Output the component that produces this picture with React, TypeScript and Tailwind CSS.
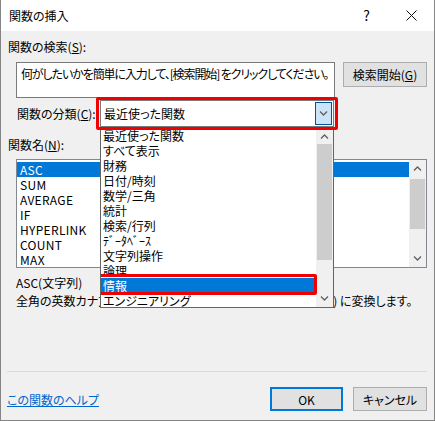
import React from "react";

const CATEGORIES = [
  "最近使った関数",
  "すべて表示",
  "財務",
  "日付/時刻",
  "数学/三角",
  "統計",
  "検索/行列",
  "ﾃﾞｰﾀﾍﾞｰｽ",
  "文字列操作",
  "論理",
  "情報",
  "エンジニアリング",
];

const FUNCTIONS = ["ASC", "SUM", "AVERAGE", "IF", "HYPERLINK", "COUNT", "MAX"];

function Chevron({ up = false }: { up?: boolean }) {
  return (
    <svg width="9" height="5" viewBox="0 0 9 5" fill="none">
      <path
        d={up ? "M1 4.5L4.5 1L8 4.5" : "M1 0.5L4.5 4L8 0.5"}
        stroke="#606060"
        strokeWidth="1.3"
      />
    </svg>
  );
}

// vertical scrollbar used by both list boxes
function ScrollBar({ thumbTop, thumbHeight }: { thumbTop: number; thumbHeight: number }) {
  return (
    <div className="relative w-[17px] h-full bg-[#f0f0f0] shrink-0">
      <div className="h-[17px] flex items-center justify-center">
        <Chevron up />
      </div>
      <div
        className="absolute left-px right-px bg-[#cdcdcd]"
        style={{ top: thumbTop, height: thumbHeight }}
      />
      <div className="absolute bottom-0 left-0 right-0 h-[17px] flex items-center justify-center">
        <Chevron />
      </div>
    </div>
  );
}

export default function App() {
  return (
    <div className="w-[435px] h-[421px] flex flex-col bg-[#f0f0f0] border-x border-b border-[#858585] text-[12px] text-black font-['Noto_Sans_CJK_JP',sans-serif] [font-feature-settings:'palt'] leading-[15px] overflow-hidden">
      {/* Title bar */}
      <div className="h-[31px] shrink-0 bg-white flex items-center pl-[8px]">
        <span>関数の挿入</span>
        <span className="ml-auto mr-[36px] text-[14px]">?</span>
        <svg className="mr-[17px]" width="11" height="11" viewBox="0 0 11 11">
          <path d="M0.5 0.5L10.5 10.5M10.5 0.5L0.5 10.5" stroke="#111" strokeWidth="1" />
        </svg>
      </div>

      <div className="flex flex-col px-[7px]">
        <div className="mt-[8px] h-[15px]">
          関数の検索(<span className="underline">S</span>):
        </div>

        <div className="mt-[8px] flex items-start pl-[8px]">
          <div className="w-[319px] h-[36px] bg-white border border-[#7a7a7a] pl-[4px] pt-[3px] whitespace-nowrap overflow-hidden tracking-[-1.1px]">
            何がしたいかを簡単に入力して、[検索開始] をクリックしてください。
          </div>
          <button className="ml-[8px] w-[84px] h-[25px] bg-[#e1e1e1] border border-[#adadad] flex items-center justify-center">
            検索開始(<span className="underline">G</span>)
          </button>
        </div>

        {/* Category combo with its open list */}
        <div className="mt-[2px] flex items-center pl-[9px]">
          <div className="w-[83px]">
            関数の分類(<span className="underline">C</span>):
          </div>
          <div className="relative w-[234px] h-[27px] bg-white border border-[#7a7a7a] flex items-center">
            <span className="pl-[3px]">最近使った関数</span>
            <div className="ml-auto mr-px w-[17px] h-[23px] bg-[#cce4f7] border border-[#005499] flex items-center justify-center">
              <Chevron />
            </div>

            <div className="absolute left-[-1px] top-[26px] w-[234px] h-[181px] bg-white border border-[#646464] flex z-10 overflow-hidden">
              <div className="flex-1 flex flex-col">
                {CATEGORIES.map((c) => (
                  <div
                    key={c}
                    className={`h-[15px] shrink-0 pl-[2px] whitespace-nowrap ${
                      c === "情報" ? "bg-[#0078d7] text-white" : ""
                    }`}
                  >
                    {c}
                  </div>
                ))}
              </div>
              <ScrollBar thumbTop={16} thumbHeight={116} />
              {/* highlight around the selected entry */}
              <div className="absolute left-[-4px] w-[220px] top-[146px] h-[21px] border-[3px] border-[#f00000] rounded-[2px]" />
            </div>

            <div className="absolute -left-[5px] -right-[5px] -top-[4px] -bottom-[4px] border-[3px] border-[#f00000] rounded-[2px] z-20" />
          </div>
        </div>

        <div className="mt-[10px] h-[15px]">
          関数名(<span className="underline">N</span>):
        </div>

        <div className="mt-[7px] ml-[8px] w-[411px] h-[109px] bg-white border border-[#828790] flex">
          <div className="flex-1 pt-[2px] flex flex-col tracking-[0.3px]">
            {FUNCTIONS.map((f, i) => (
              <div
                key={f}
                className={`h-[15px] pl-[3px] ${i === 0 ? "bg-[#0078d7] text-white" : ""}`}
              >
                {f}
              </div>
            ))}
          </div>
          <ScrollBar thumbTop={19} thumbHeight={50} />
        </div>

        <div className="mt-[7px] ml-[8px] h-[15px]">ASC(文字列)</div>
        <div className="mt-[3px] ml-[8px] h-[15px] whitespace-nowrap">
          全角の英数カナ文字を半角の英数カナ文字 (1 バイト英数カナ) に変換します。
        </div>

        <div className="mt-[63px] -ml-px h-px bg-[#dadada]" />

        <div className="mt-[15px] -ml-px h-[24px] flex items-center">
          <a className="text-[#0066cc] underline">この関数のヘルプ</a>
          <button className="ml-auto w-[73px] h-[24px] bg-[#e1e1e1] border-2 border-[#0078d7] flex items-center justify-center">
            OK
          </button>
          <button className="ml-[10px] w-[74px] h-[24px] bg-[#e1e1e1] border border-[#adadad] flex items-center justify-center">
            キャンセル
          </button>
        </div>
      </div>
    </div>
  );
}
